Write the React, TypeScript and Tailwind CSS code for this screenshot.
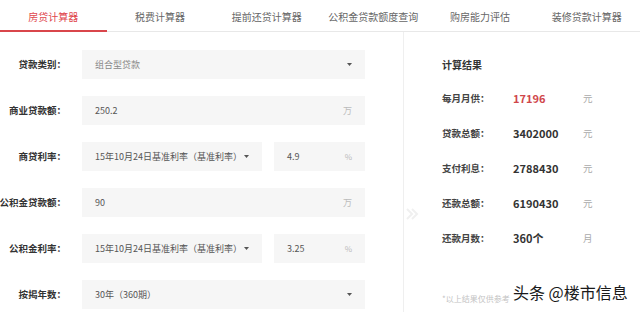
import React from 'react';

const font = '"Noto Sans CJK SC", "Noto Sans", sans-serif';

const tabs = ['房贷计算器', '税费计算器', '提前还贷计算器', '公积金贷款额度查询', '购房能力评估', '装修贷款计算器'];

const results = [
    { label: '每月月供：', value: '17196', unit: '元', red: true },
    { label: '贷款总额：', value: '3402000', unit: '元' },
    { label: '支付利息：', value: '2788430', unit: '元' },
    { label: '还款总额：', value: '6190430', unit: '元' },
    { label: '还款月数：', value: '360个', unit: '月' },
];

const Caret = () => (
    <svg width="5" height="3" viewBox="0 0 5 3" className="shrink-0">
        <path d="M0 0 L5 0 L2.5 3 Z" fill="#555" />
    </svg>
);

const Label: React.FC<{ text: string }> = ({ text }) => (
    <div className="w-[66px] shrink-0 flex justify-end whitespace-nowrap text-[9.5px] font-semibold text-[#333]">{text}</div>
);

const Box: React.FC<{ children: React.ReactNode; className?: string }> = ({ children, className }) => (
    <div className={`h-[29px] bg-[#f6f6f6] flex items-center px-[13px] text-[9px] whitespace-nowrap ${className ?? ''}`}>
        {children}
    </div>
);

export default function App() {
    return (
        <div className="w-[640px] h-[312px] overflow-hidden bg-white relative" style={{ fontFamily: font }}>
            <div className="flex h-[32px] border-b border-[#e8e8e8]">
                {tabs.map((t, i) => (
                    <div
                        key={t}
                        className={
                            i === 0
                                ? 'flex-1 flex items-center justify-center text-[10px] text-[#e0474d] border-b-2 border-[#d9464b] mb-[-1px] pt-[2px]'
                                : 'flex-1 flex items-center justify-center text-[10px] text-[#666] pt-[2px]'
                        }
                    >
                        {t}
                    </div>
                ))}
            </div>

            <div className="flex h-[280px]">
                <div className="w-[403px] shrink-0 pt-[18px] flex flex-col gap-[17px]">
                    <div className="flex items-center">
                        <Label text="贷款类别：" />
                        <Box className="ml-[16px] w-[283px] justify-between text-[#888]">
                            <span>组合型贷款</span>
                            <Caret />
                        </Box>
                    </div>
                    <div className="flex items-center">
                        <Label text="商业贷款额：" />
                        <Box className="ml-[16px] w-[283px] justify-between text-[#555]">
                            <span>250.2</span>
                            <span className="text-[#bbb]">万</span>
                        </Box>
                    </div>
                    <div className="flex items-center">
                        <Label text="商贷利率：" />
                        <Box className="ml-[16px] w-[180px] justify-between text-[#555]">
                            <span>15年10月24日基准利率（基准利率）</span>
                            <Caret />
                        </Box>
                        <Box className="ml-[12px] w-[91px] justify-between text-[#555]">
                            <span>4.9</span>
                            <span className="text-[#bbb] text-[8px]">%</span>
                        </Box>
                    </div>
                    <div className="flex items-center">
                        <Label text="公积金贷款额：" />
                        <Box className="ml-[16px] w-[283px] justify-between text-[#555]">
                            <span>90</span>
                            <span className="text-[#bbb]">万</span>
                        </Box>
                    </div>
                    <div className="flex items-center">
                        <Label text="公积金利率：" />
                        <Box className="ml-[16px] w-[180px] justify-between text-[#555]">
                            <span>15年10月24日基准利率（基准利率）</span>
                            <Caret />
                        </Box>
                        <Box className="ml-[12px] w-[91px] justify-between text-[#555]">
                            <span>3.25</span>
                            <span className="text-[#bbb] text-[8px]">%</span>
                        </Box>
                    </div>
                    <div className="flex items-center">
                        <Label text="按揭年数：" />
                        <Box className="ml-[16px] w-[283px] justify-between text-[#555]">
                            <span>30年（360期）</span>
                            <Caret />
                        </Box>
                    </div>
                </div>

                <div className="flex-1 border-l border-[#efefef] relative pl-[38px] pt-[23px]">
                    <svg width="14" height="14" viewBox="0 0 14 14" className="absolute left-[1px] top-[175px]">
                        <path d="M2 2 L7 7 L2 12 M7 2 L12 7 L7 12" stroke="#f0f0f0" strokeWidth="2" fill="none" />
                    </svg>
                    <div className="h-[18px] flex items-center text-[10px] font-bold text-[#333]">计算结果</div>
                    <div className="mt-[8px] flex flex-col">
                        {results.map(r => (
                            <div key={r.label} className="h-[35px] flex items-center">
                                <div className="w-[71px] text-[9.5px] font-semibold text-[#444]">{r.label}</div>
                                <div className={`w-[70px] text-[11px] font-bold ${r.red ? 'text-[#d0464a]' : 'text-[#333]'}`}>{r.value}</div>
                                <div className="text-[9.5px] text-[#aaa]">{r.unit}</div>
                            </div>
                        ))}
                    </div>
                    <div className="mt-[37px] text-[8px] text-[#c4c4c4]">*以上结果仅供参考</div>
                </div>
            </div>

            <div
                className="absolute left-[513px] top-[280px] text-[16px] text-[#1a1a1a] leading-[24px]"
                style={{ textShadow: '0 0 3px #fff, 0 0 3px #fff' }}
            >
                头条 @楼市信息
            </div>
        </div>
    );
}
